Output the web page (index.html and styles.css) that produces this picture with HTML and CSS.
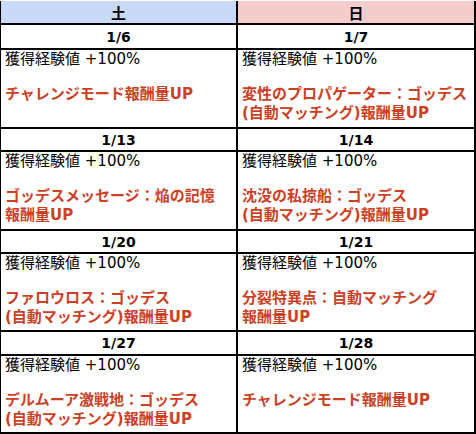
FILE: index.html
```
<!DOCTYPE html>
<html lang="ja">
<head>
<meta charset="utf-8">
<link rel="stylesheet" href="styles.css">
</head>
<body>
<div class="schedule">
  <div class="cell head sat">土</div>
  <div class="cell head sun">日</div>

  <div class="cell date">1/6</div>
  <div class="cell date">1/7</div>
  <div class="cell body"><p class="exp">獲得経験値 +100%</p><p class="bonus">チャレンジモード報酬量UP</p></div>
  <div class="cell body"><p class="exp">獲得経験値 +100%</p><p class="bonus">変性のプロパゲーター：ゴッデス<br>(自動マッチング)報酬量UP</p></div>

  <div class="cell date">1/13</div>
  <div class="cell date">1/14</div>
  <div class="cell body"><p class="exp">獲得経験値 +100%</p><p class="bonus">ゴッデスメッセージ：焔の記憶<br>報酬量UP</p></div>
  <div class="cell body"><p class="exp">獲得経験値 +100%</p><p class="bonus">沈没の私掠船：ゴッデス<br>(自動マッチング)報酬量UP</p></div>

  <div class="cell date">1/20</div>
  <div class="cell date">1/21</div>
  <div class="cell body"><p class="exp">獲得経験値 +100%</p><p class="bonus">ファロウロス：ゴッデス<br>(自動マッチング)報酬量UP</p></div>
  <div class="cell body"><p class="exp">獲得経験値 +100%</p><p class="bonus">分裂特異点：自動マッチング<br>報酬量UP</p></div>

  <div class="cell date">1/27</div>
  <div class="cell date">1/28</div>
  <div class="cell body"><p class="exp">獲得経験値 +100%</p><p class="bonus">デルムーア激戦地：ゴッデス<br>(自動マッチング)報酬量UP</p></div>
  <div class="cell body"><p class="exp">獲得経験値 +100%</p><p class="bonus">チャレンジモード報酬量UP</p></div>
</div>
</body>
</html>
```
FILE: styles.css
```
html, body {
  margin: 0;
  padding: 0;
  background: #ffffff;
}

.schedule {
  margin-top: 1px;
  display: grid;
  grid-template-columns: 235px 236px;
  grid-template-rows: 22px 23px 77px 21px 77px 21px 76px 22px 76px;
  gap: 2px;
  padding: 0 2px 2px 1px;
  background: #000000;
  width: 473px;
  font-family: "DejaVu Sans", "Noto Sans CJK JP", sans-serif;
  color: #000000;
}

.cell {
  background: #ffffff;
  overflow: hidden;
}

.head {
  display: flex;
  align-items: center;
  justify-content: center;
  font-weight: bold;
  font-size: 15px;
  font-family: "Noto Sans CJK JP", sans-serif;
}

.sat { background: #c9daf8; }
.sun { background: #f4cccc; }

.date {
  display: flex;
  align-items: center;
  justify-content: center;
  font-weight: bold;
  font-size: 14px;
}

.body {
  padding: 0 4px;
}

.exp {
  margin: 0 0 16px;
  font-size: 15px;
  line-height: 19px;
}

.bonus {
  margin: 0;
  font-size: 15px;
  line-height: 19px;
  font-weight: bold;
  color: #cc4125;
}
```
